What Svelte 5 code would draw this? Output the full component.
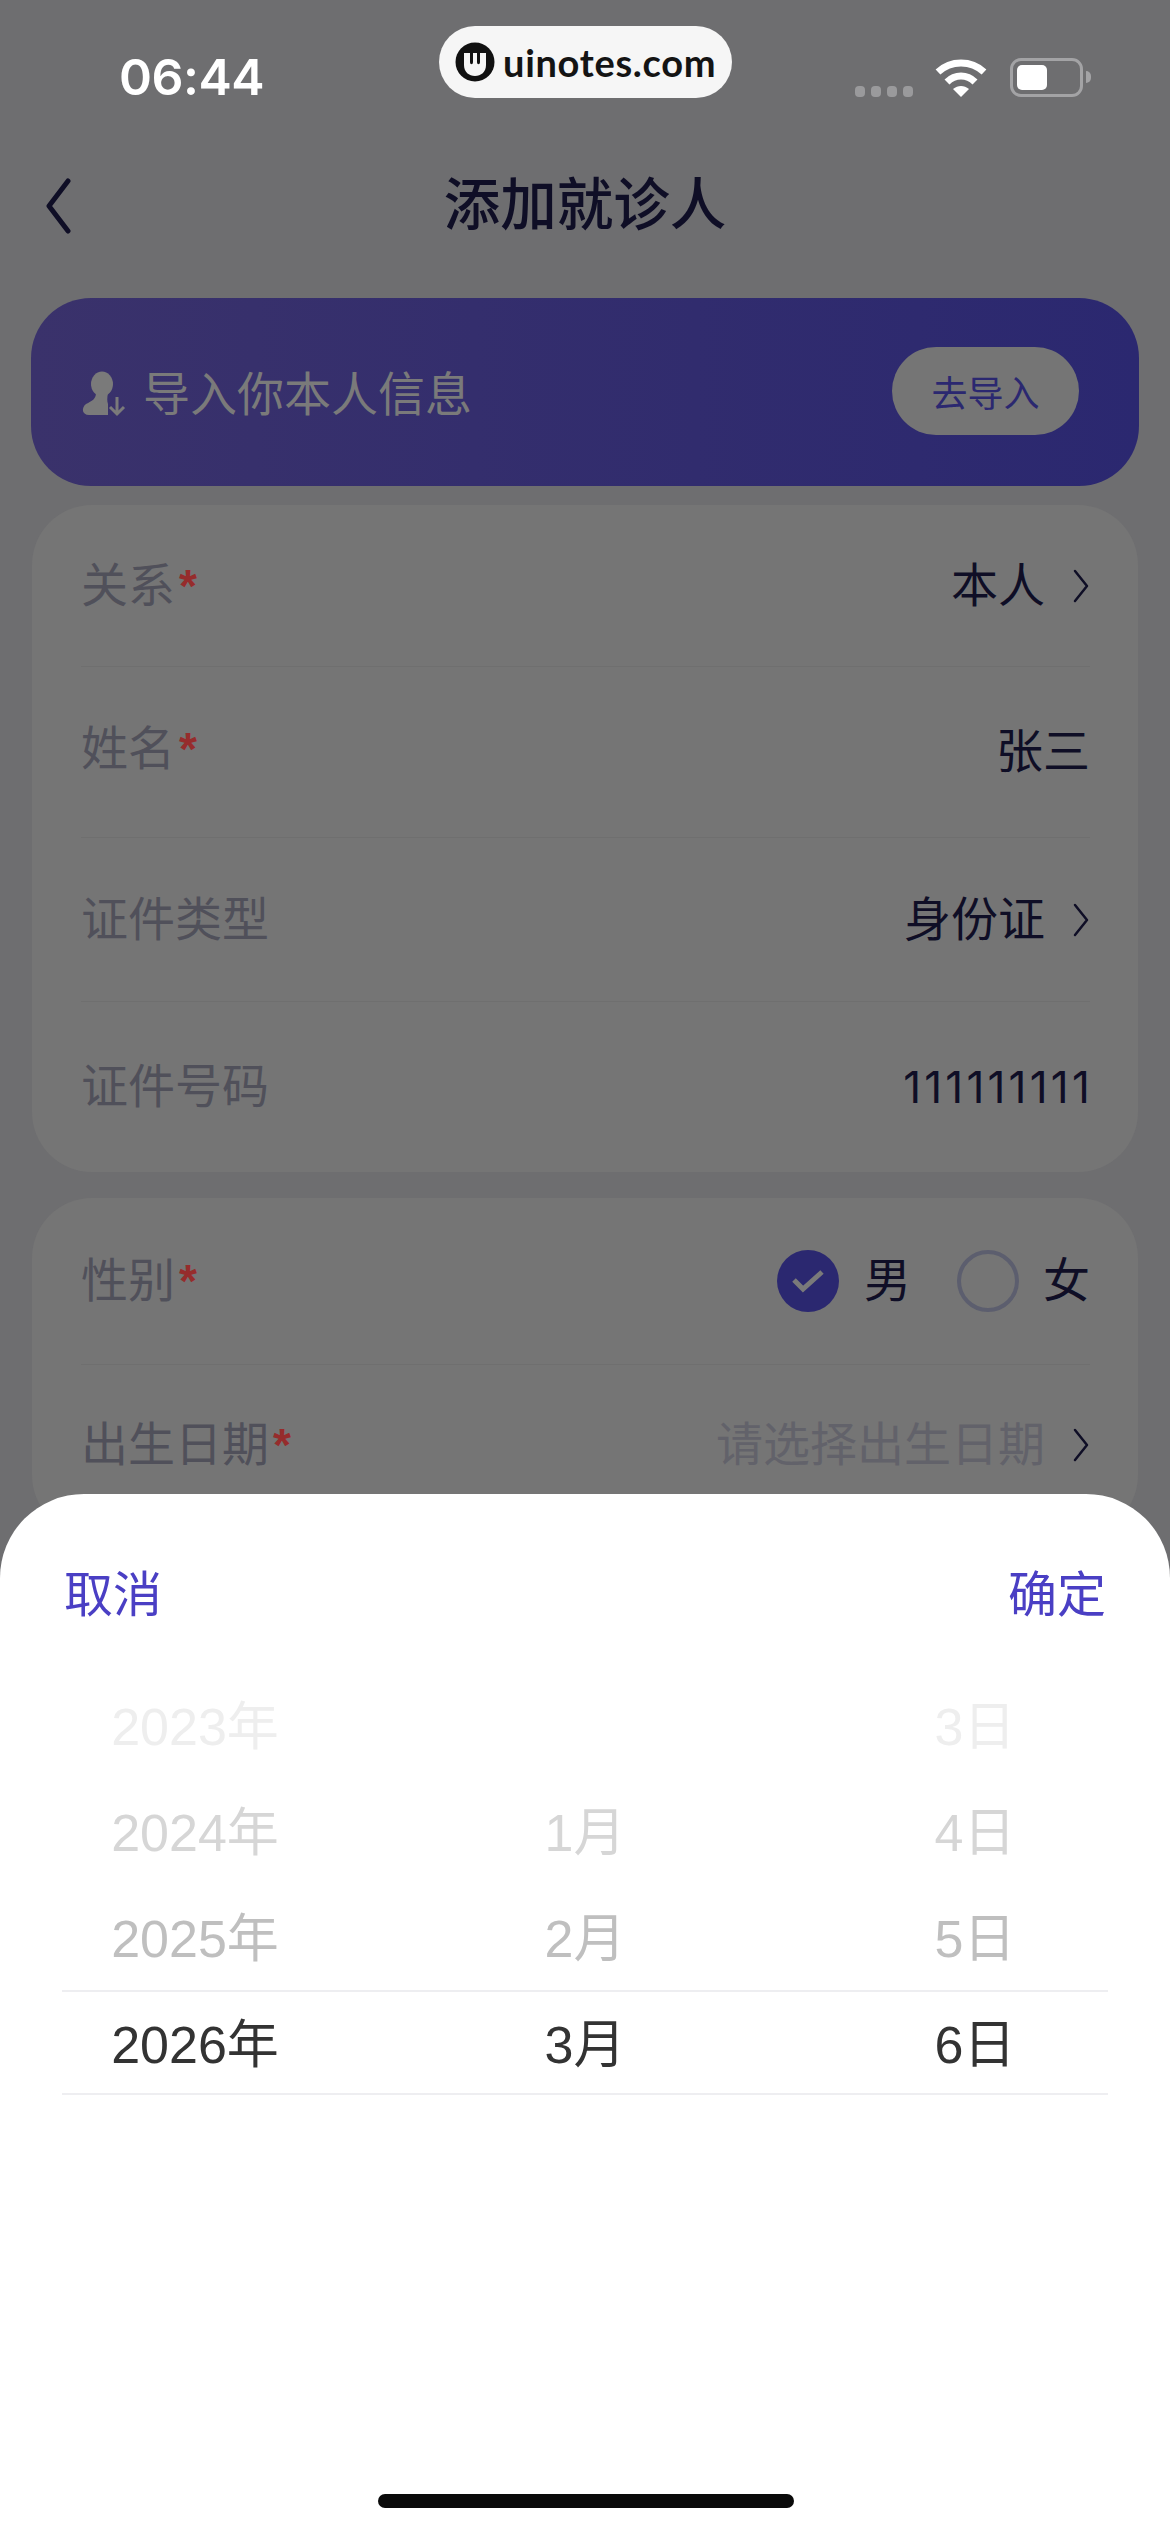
<script>
  const years = ['2023年', '2024年', '2025年', '2026年'];
  const months = ['', '1月', '2月', '3月'];
  const days = ['3日', '4日', '5日', '6日'];
  const columns = [years, months, days];
</script>

<div class="page">
  <div class="status">
    <span class="time">06:44</span>
    <div class="status-icons">
      <div class="dots"><i></i><i></i><i></i><i></i></div>
      <svg class="wifi" width="52" height="40" viewBox="0 0 52 40">
        <path d="M3 14 C16 2 36 2 49 14" fill="none" stroke="#fff" stroke-width="7" />
        <path d="M12 24 C20 16 32 16 40 24" fill="none" stroke="#fff" stroke-width="7" />
        <path d="M18 31 C23 27 29 27 34 31 L26 39 Z" fill="#fff" />
      </svg>
      <div class="battery"><b></b></div>
      <span class="nub"></span>
    </div>
  </div>

  <div class="mark">
    <svg width="40" height="40" viewBox="0 0 40 40">
      <circle cx="20" cy="20" r="19.5" fill="#111" />
      <path d="M9 11 H15 V20 C15 23 18 23 18 20 V11 H22 V20 C22 23 25 23 25 20 V11 H31 V23 C31 30 26 34 20 34 C14 34 9 30 9 23 Z" fill="#f6f6f6" />
    </svg>
    <span>uinotes.com</span>
  </div>

  <header class="nav">
    <svg class="back" width="30" height="56" viewBox="0 0 30 56">
      <path d="M25 3 L6 28 L25 53" fill="none" stroke="#0f0e26" stroke-width="5" stroke-linecap="round" stroke-linejoin="round" />
    </svg>
    <h1>添加就诊人</h1>
  </header>

  <section class="banner">
    <div class="import">
      <svg width="46" height="48" viewBox="0 0 46 48">
        <ellipse cx="21" cy="13" rx="11" ry="12.5" fill="#7a7a7a" />
        <path d="M15 22 H27 C26 27 26 30 27 33 V44 H8 C1 44 0 37 5 33 C11 30 15 28 15 22 Z" fill="#7a7a7a" />
        <path d="M36 26 V43 M29 36 L36 43 L43 36" fill="none" stroke="#7a7a7a" stroke-width="3" />
      </svg>
      <span>导入你本人信息</span>
    </div>
    <div class="go">去导入</div>
  </section>

  <section class="card">
    <div class="row h1">
      <span class="label">关系<em>*</em></span>
      <span class="value">本人
        <svg class="chev" width="18" height="36" viewBox="0 0 18 36"><path d="M3 3 L15 18 L3 33" /></svg>
      </span>
    </div>
    <div class="row h2">
      <span class="label up">姓名<em>*</em></span>
      <span class="value">张三</span>
    </div>
    <div class="row h3">
      <span class="label">证件类型</span>
      <span class="value">身份证
        <svg class="chev" width="18" height="36" viewBox="0 0 18 36"><path d="M3 3 L15 18 L3 33" /></svg>
      </span>
    </div>
    <div class="row h4">
      <span class="label">证件号码</span>
      <span class="value num">111111111</span>
    </div>
  </section>

  <section class="card second">
    <div class="row h5">
      <span class="label">性别<em>*</em></span>
      <div class="gender">
        <span class="radio on">
          <svg width="34" height="26" viewBox="0 0 34 26"><path d="M3 12 L12 21 L31 4" fill="none" stroke="#7a7a7a" stroke-width="5" /></svg>
        </span>
        <span class="value">男</span>
        <span class="radio"></span>
        <span class="value">女</span>
      </div>
    </div>
    <div class="row h6">
      <span class="label">出生日期<em>*</em></span>
      <span class="value hint">请选择出生日期
        <svg class="chev" width="18" height="36" viewBox="0 0 18 36"><path d="M3 3 L15 18 L3 33" /></svg>
      </span>
    </div>
  </section>

  <div class="sheet">
    <div class="actions"><span>取消</span><span>确定</span></div>
    <div class="picker">
      <div class="band"></div>
      {#each columns as col}
        <div class="col">
          {#each col as item, i}
            <div class="cell c{i}">{item}</div>
          {/each}
        </div>
      {/each}
    </div>
    <div class="home"></div>
  </div>
</div>

<style>
  :global(body) {
    margin: 0;
    background: #6e6e70;
  }
  .page {
    position: relative;
    width: 1170px;
    height: 2532px;
    overflow: hidden;
    background: #6e6e70;
    font-family: "Liberation Sans", "Noto Sans CJK SC", sans-serif;
    color: #0f0e26;
  }
  .status {
    height: 154px;
    display: flex;
    align-items: center;
    justify-content: space-between;
    padding: 0 79px 0 119px;
    box-sizing: border-box;
  }
  .time {
    font-family: "Inter", "Liberation Sans", sans-serif;
    font-size: 50px;
    font-weight: 600;
    color: #fff;
    letter-spacing: -0.5px;
  }
  .status-icons {
    display: flex;
    align-items: center;
    height: 40px;
  }
  .dots {
    display: flex;
    gap: 6px;
    margin: 28px 22px 0 0;
  }
  .dots i {
    width: 10px;
    height: 11px;
    border-radius: 4px;
    background: #9a9a9c;
  }
  .wifi {
    margin-top: 2px;
  }
  .battery {
    box-sizing: border-box;
    width: 73px;
    height: 39px;
    margin-left: 23px;
    padding: 4px;
    border: 3px solid #a3a3a5;
    border-radius: 11px;
  }
  .battery b {
    display: block;
    width: 30px;
    height: 100%;
    border-radius: 5px;
    background: #fff;
  }
  .nub {
    width: 5px;
    height: 12px;
    margin-left: 3px;
    border-radius: 0 6px 6px 0;
    background: #a3a3a5;
  }
  .mark {
    position: absolute;
    left: 439px;
    top: 26px;
    width: 293px;
    height: 72px;
    box-sizing: border-box;
    padding-left: 16px;
    display: flex;
    align-items: center;
    gap: 8px;
    border-radius: 36px;
    background: #f6f6f6;
    color: #141414;
  }
  .mark span {
    font-family: "Lato", sans-serif;
    font-size: 38px;
    font-weight: 700;
    letter-spacing: 0.7px;
  }
  .nav {
    position: relative;
    height: 102px;
    display: flex;
    align-items: center;
    justify-content: center;
    margin-bottom: 42px;
  }
  .back {
    position: absolute;
    left: 43px;
    top: 24px;
  }
  h1 {
    margin: 2px 0 0;
    font-size: 56.5px;
    line-height: 70px;
    font-weight: 500;
  }
  .banner {
    margin: 0 31px;
    height: 188px;
    box-sizing: border-box;
    padding: 0 60px 0 50px;
    display: flex;
    align-items: center;
    justify-content: space-between;
    border-radius: 60px;
    background: linear-gradient(90deg, #3a326b, #2b2870);
  }
  .import {
    display: flex;
    align-items: center;
    gap: 16px;
    margin-top: 6px;
    font-size: 47px;
    line-height: 60px;
    color: #7a7a7a;
  }
  .go {
    width: 187px;
    height: 88px;
    margin-top: -2px;
    display: flex;
    align-items: center;
    justify-content: center;
    border-radius: 44px;
    background: #757575;
    color: #2b2870;
    font-size: 36px;
  }
  .card {
    margin: 19px 32px 0;
    padding: 0 48px 0 49px;
    border-radius: 60px;
    background: #757575;
  }
  .card.second {
    margin-top: 26px;
  }
  .row {
    display: flex;
    align-items: center;
    justify-content: space-between;
    box-sizing: border-box;
    border-bottom: 1px solid #6f6f6f;
    font-size: 47px;
    line-height: 60px;
  }
  .row:last-child {
    border-bottom: 0;
  }
  .h1 { height: 162px; }
  .h2 { height: 171px; }
  .h3 { height: 164px; }
  .h4 { height: 170px; }
  .h5 { height: 167px; }
  .h6 { height: 170px; padding-bottom: 10px; }
  .label {
    color: #50505a;
  }
  .label.up {
    margin-top: -6px;
  }
  .label em {
    font-style: normal;
    font-weight: 700;
    color: #962c2c;
    font-size: 46px;
    margin-left: 4px;
  }
  .value {
    display: flex;
    align-items: center;
    gap: 27px;
    color: #0f0e26;
  }
  .value.hint {
    color: #62626a;
  }
  .num {
    font-family: "Inter", sans-serif;
    font-size: 44px;
    letter-spacing: 3.2px;
    margin-right: -3px;
  }
  .chev {
    fill: none;
    stroke: #0f0e26;
    stroke-width: 2.5;
    stroke-linecap: round;
    stroke-linejoin: round;
  }
  .gender {
    display: flex;
    align-items: center;
  }
  .gender .value:nth-child(2) {
    margin: 0 46px 0 25px;
  }
  .gender .value:nth-child(4) {
    margin-left: 24px;
  }
  .radio {
    width: 62px;
    height: 62px;
    box-sizing: border-box;
    display: flex;
    align-items: center;
    justify-content: center;
    border-radius: 50%;
    border: 4px solid #5c5e6e;
  }
  .radio.on {
    border: 0;
    background: #2b2870;
  }
  .sheet {
    position: absolute;
    left: 0;
    right: 0;
    top: 1494px;
    bottom: 0;
    border-radius: 84px 84px 0 0;
    background: #fff;
  }
  .actions {
    display: flex;
    justify-content: space-between;
    padding: 64px 64px 0;
    font-size: 49px;
    line-height: 74px;
    color: #4a3fc4;
  }
  .picker {
    position: relative;
    display: grid;
    grid-template-columns: repeat(3, 1fr);
    margin-top: 42px;
    font-size: 52px;
    text-align: center;
  }
  .band {
    position: absolute;
    left: 62px;
    right: 62px;
    top: 316px;
    height: 105px;
    box-sizing: border-box;
    border-top: 2px solid #eeeef1;
    border-bottom: 2px solid #eeeef1;
  }
  .cell {
    height: 106px;
    line-height: 106px;
  }
  .c0 { color: #eeeeee; }
  .c1 { color: #d6d6d6; }
  .c2 { color: #bfbfbf; }
  .c3 { color: #333; }
  .home {
    position: absolute;
    left: 378px;
    bottom: 24px;
    width: 416px;
    height: 14px;
    border-radius: 7px;
    background: #0a0a0a;
  }
</style>
